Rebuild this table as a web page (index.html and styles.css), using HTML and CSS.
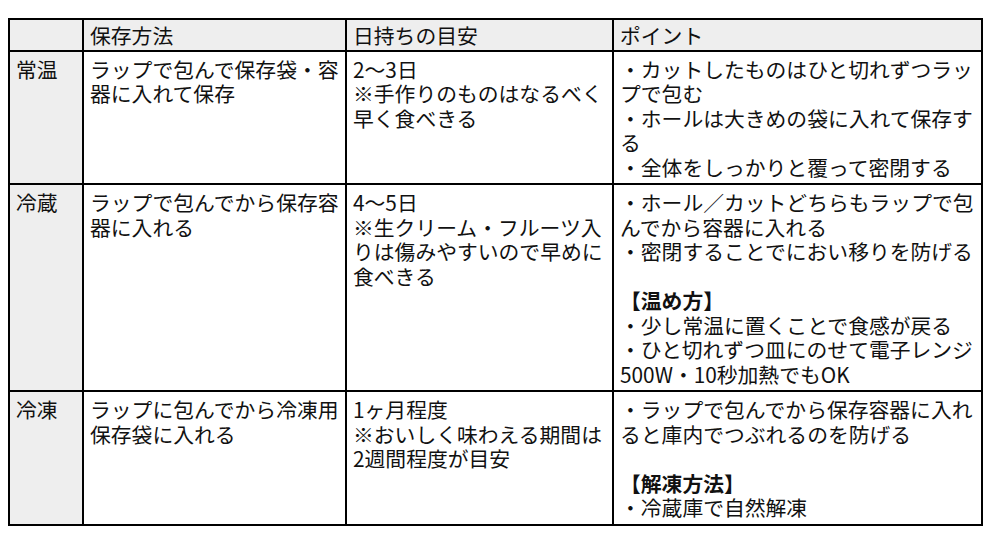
FILE: index.html
```html
<!DOCTYPE html>
<html lang="ja">
<head>
<meta charset="utf-8">
<title>保存方法</title>
<link rel="stylesheet" href="styles.css">
</head>
<body>
<table class="storage">
  <colgroup>
    <col class="c1"><col class="c2"><col class="c3"><col class="c4">
  </colgroup>
  <thead>
    <tr class="head">
      <th></th>
      <th>保存方法</th>
      <th>日持ちの目安</th>
      <th>ポイント</th>
    </tr>
  </thead>
  <tbody>
    <tr>
      <th class="label">常温</th>
      <td>ラップで包んで保存袋・容<br>器に入れて保存</td>
      <td>2〜3日<br>※手作りのものはなるべく<br>早く食べきる</td>
      <td>・カットしたものはひと切れずつラッ<br>プで包む<br>・ホールは大きめの袋に入れて保存す<br>る<br>・全体をしっかりと覆って密閉する</td>
    </tr>
    <tr>
      <th class="label">冷蔵</th>
      <td>ラップで包んでから保存容<br>器に入れる</td>
      <td>4〜5日<br>※生クリーム・フルーツ入<br>りは傷みやすいので早めに<br>食べきる</td>
      <td>・ホール／カットどちらもラップで包<br>んでから容器に入れる<br>・密閉することでにおい移りを防げる<br><br><b>【温め方】</b><br>・少し常温に置くことで食感が戻る<br>・ひと切れずつ皿にのせて電子レンジ<br>500W・10秒加熱でもOK</td>
    </tr>
    <tr>
      <th class="label">冷凍</th>
      <td>ラップに包んでから冷凍用<br>保存袋に入れる</td>
      <td>1ヶ月程度<br>※おいしく味わえる期間は<br>2週間程度が目安</td>
      <td>・ラップで包んでから保存容器に入れ<br>ると庫内でつぶれるのを防げる<br><br><b>【解凍方法】</b><br>・冷蔵庫で自然解凍</td>
    </tr>
  </tbody>
</table>
</body>
</html>
```

FILE: styles.css
```css
html, body {
  margin: 0;
  padding: 0;
  background: #ffffff;
}
body {
  padding: 18px 8px;
  font-family: "Noto Sans CJK JP", "Noto Sans", sans-serif;
  font-size: 20.8px;
  line-height: 24.5px;
  color: #111111;
}
.storage {
  border-collapse: separate;
  border-spacing: 0;
  table-layout: fixed;
  width: 975px;
  border-left: 2px solid #000;
  border-top: 2px solid #000;
}
.c1 { width: 74px; }
.c2 { width: 263px; }
.c3 { width: 267px; }
.c4 { width: 369px; }
.storage th,
.storage td {
  box-sizing: border-box;
  border-right: 2px solid #000;
  border-bottom: 2px solid #000;
  padding: 5px 1px 4px 6px;
  vertical-align: top;
  text-align: left;
  font-weight: normal;
  white-space: nowrap;
}
.storage .head th {
  background: #eeeeee;
  padding-top: 3px;
  padding-bottom: 2px;
}
.storage th.label {
  background: #eeeeee;
}
.storage b {
  font-weight: bold;
}
```
